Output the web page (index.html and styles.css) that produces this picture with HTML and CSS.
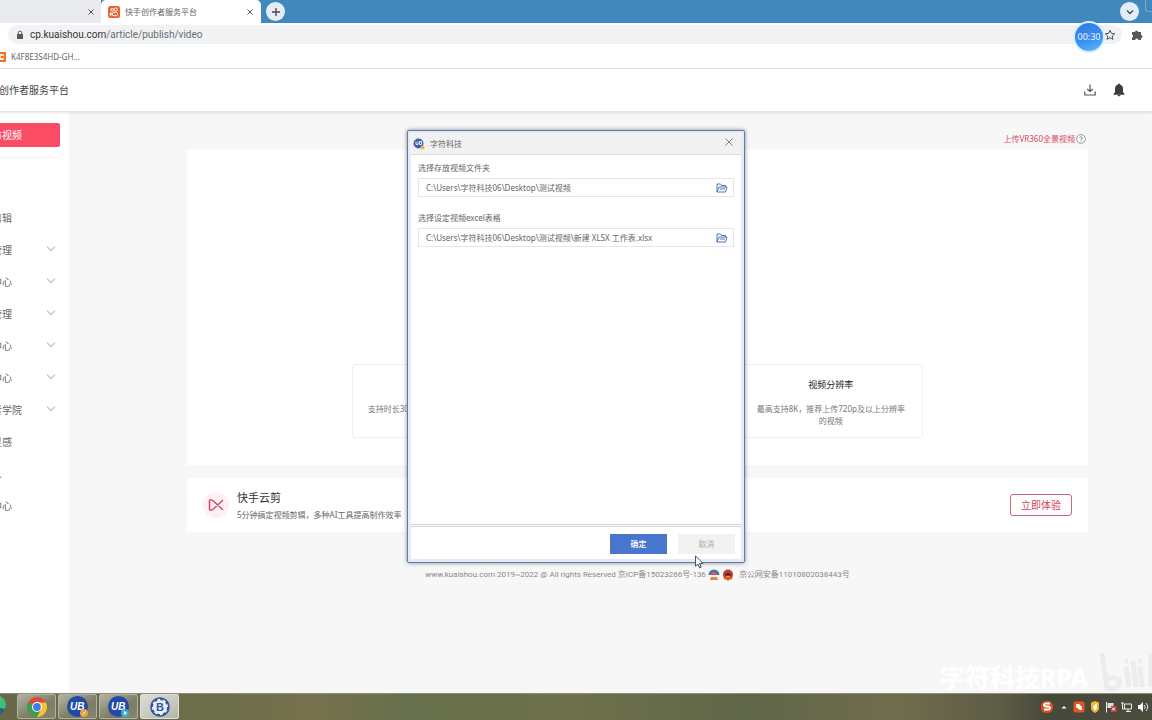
FILE: index.html
```html
<!DOCTYPE html>
<html lang="zh-CN">
<head>
<meta charset="utf-8">
<title>快手创作者服务平台</title>
<link rel="stylesheet" href="styles.css">
</head>
<body>
<div class="screen">
  <div class="tabs">
    <div class="tab tab-idle"><button class="close" aria-label="关闭"><svg width="8" height="8" viewBox="0 0 8 8"><path d="M1.5 1.5l5 5m0-5l-5 5"/></svg></button></div>
    <div class="tab tab-active">
      <svg width="12" height="12" viewBox="0 0 12 12"><rect width="12" height="12" rx="2.5" fill="#e8622a"/><g fill="none" stroke="#fff"><circle cx="4.2" cy="3.8" r="1.4"/><circle cx="7.8" cy="3.6" r="1.6"/><rect x="4.5" y="6.5" width="5" height="3.2" rx="1"/><path d="M2.2 6.8l2.3 1.2-2.3 1.6z"/></g></svg>
      <span class="tab-title">快手创作者服务平台</span>
      <button class="close" aria-label="关闭"><svg width="8" height="8" viewBox="0 0 8 8"><path d="M1.5 1.5l5 5m0-5l-5 5"/></svg></button>
    </div>
    <button class="round new-tab" aria-label="新标签页"><svg width="10" height="10" viewBox="0 0 10 10"><path d="M5 1v8M1 5h8"/></svg></button>
    <button class="round tab-search" aria-label="搜索标签页"><svg width="10" height="10" viewBox="0 0 10 10"><path d="M2 3.5l3 3 3-3"/></svg></button>
    <div class="win-edge"></div>
  </div>
  <div class="toolbar">
    <div class="address">
      <svg width="8" height="10" viewBox="0 0 8 10"><rect x="1" y="4" width="6" height="5" rx=".6" fill="#555a5e"/><path d="M2.3 4V2.8a1.7 1.7 0 0 1 3.4 0V4" fill="none" stroke="#555a5e"/></svg>
      <span class="url"><b>cp.kuaishou.com</b>/article/publish/video</span>
      <svg class="star" width="12" height="12" viewBox="0 0 12 12"><path d="M6 1.3l1.4 3.1 3.3.4-2.5 2.2.7 3.4L6 8.7l-2.9 1.7.7-3.4L1.3 4.8l3.3-.4z" fill="none" stroke="#4c5054"/></svg>
    </div>
    <svg width="12" height="12" viewBox="0 0 12 12"><path d="M1 3h3a1.5 1.5 0 1 1 3 0h3v3a1.5 1.5 0 1 1 0 3v2H7.4a1.6 1.6 0 0 0-3.2 0H1V8.400a1.5 1.5 0 0 0 0-2.900z" fill="#55595d"/></svg>
    <div class="timer">00:30</div>
  </div>
  <div class="bookmarks">
    <svg width="6" height="12" viewBox="0 0 6 12"><rect x="-6" y="1" width="12" height="10" rx="1" fill="#ee7424"/><path d="M3.800 4.500Q0 2.500 0 6t3.800 1.500" fill="none" stroke="#fff" stroke-width="1.500"/></svg>
    <a href="#">K4F8E3S4HD-GH...</a>
  </div>
  <header class="header">
    <span class="site-name">创作者服务平台</span>
    <svg width="12" height="12" viewBox="0 0 12 12"><path d="M6 .5v6.800M3.200 5L6 7.500 8.800 5M.8 7.500V11h10.400V7.500" fill="none" stroke="#555" stroke-width="1.200"/></svg>
    <svg width="12" height="14" viewBox="0 0 12 14"><path d="M6 .5c.6 0 .9.400 1 .9C9 2 10 3.700 10 5.500V9l1.500 2v.7H.5V11L2 9V5.500C2 3.700 3 2 5 1.400c.1-.5.400-.9 1-.9zM4.500 12h3c0 1.800-3 1.800-3 0z" fill="#3c3c3c"/></svg>
  </header>
  <div class="body">
    <nav class="side">
      <div class="publish-wrap"><button class="publish"><span class="clip wide">布视频</span></button></div>
      <ul class="menu">
        <li><span class="clip">剪辑</span></li>
        <li class="more"><span class="clip">管理</span></li>
        <li class="more"><span class="clip">中心</span></li>
        <li class="more"><span class="clip">管理</span></li>
        <li class="more"><span class="clip">中心</span></li>
        <li class="more"><span class="clip">中心</span></li>
        <li class="more"><span class="clip wide">者学院</span></li>
        <li><span class="clip">灵感</span></li>
        <li><span class="clip tiny">人</span></li>
        <li><span class="clip">中心</span></li>
      </ul>
    </nav>
    <main class="main">
      <div class="vr"><a href="#">上传VR360全景视频</a><svg width="10" height="10" viewBox="0 0 10 10"><circle cx="5" cy="5" r="4.400" fill="none" stroke="#888" stroke-width=".8"/><path d="M3.700 4a1.300 1.300 0 1 1 1.300 1.400v.8M5 7v.8" fill="none" stroke="#888" stroke-width=".8"/></svg></div>
      <section class="upload">
        <div class="specs">
          <article class="spec"><h3>视频大小</h3><p>支持时长30分钟以内，最大支持8GB的视频</p></article>
          <article class="spec"><h3>视频格式</h3><p>支持常用视频格式</p></article>
          <article class="spec"><h3>视频分辨率</h3><p>最高支持8K，推荐上传720p及以上分辨率的视频</p></article>
        </div>
      </section>
      <section class="promo">
        <svg width="28" height="28" viewBox="0 0 28 28"><circle cx="14" cy="14" r="13" fill="#fff1f3"/><path d="M20.500 9.500L12 17.500c-2 1.700-4.500 2.400-4.500.5v-8c0-2 2.500-1.200 4.500.5l8.500 8" fill="none" stroke="#d04a66" stroke-width="1.500" stroke-linecap="round"/></svg>
        <div class="promo-text"><h2>快手云剪</h2><p>5分钟搞定视频剪辑，多种AI工具提高制作效率</p></div>
        <button class="try">立即体验</button>
      </section>
      <footer class="footer">
        <span>www.kuaishou.com 2019~2022 @ All rights Reserved 京ICP备15023266号-136</span>
        <svg width="12" height="12" viewBox="0 0 12 12"><path d="M.5 6a5.500 5.500 0 0 1 11 0z" fill="#3e78a8"/><path d="M3 6a3 3 0 0 1 6 0z" fill="#d95948"/><path d="M1 6.500h10v2H1z" fill="#f5f5f5"/><path d="M3 8h6l1 3H2z" fill="#e98242"/></svg>
        <svg width="12" height="12" viewBox="0 0 12 12"><path d="M2 8l-1 2 5 2 5-2-1-2z" fill="#e9ad3d"/><circle cx="6" cy="5.500" r="5" fill="#c43c31"/><path d="M3 5q3-3 6 0v1.500H3z" fill="#60251f"/><path d="M4 8h4" stroke="#f6c95c"/></svg>
        <span>京公网安备11010802038443号</span>
      </footer>
      <div class="watermark"><span>字符科技RPA</span>
        <svg width="52" height="44" viewBox="0 0 52 44" fill="none" stroke="#ececec" stroke-width="5"><path d="M2 4l5 35q10 3 12-4t-12-6M26 18l3 20M33 12l3 26M40 18l2 20M51 4v34"/><path d="M26 10l1 4M40 10l1 4" stroke-width="3"/></svg>
      </div>
    </main>
  </div>
  <div class="overlay">
    <div class="dialog" role="dialog" aria-label="字符科技">
      <div class="titlebar">
        <svg width="12" height="12" viewBox="0 0 12 12"><circle cx="5.500" cy="5.500" r="5" fill="#3d62ad"/><path d="M3 3.500v3h2v-3M6.500 3.500v3h2v-3z" fill="none" stroke="#dfe8fa"/><circle cx="9.500" cy="9.500" r="2" fill="#ecb656"/></svg>
        <span>字符科技</span>
        <button class="dialog-close" aria-label="关闭"><svg width="8" height="8" viewBox="0 0 8 8"><path d="M.5.5l7 7m0-7l-7 7" stroke="#666" stroke-width=".8"/></svg></button>
      </div>
      <div class="form">
        <label for="folder">选择存放视频文件夹</label>
        <div class="field"><input id="folder" type="text" value="C:\Users\字符科技06\Desktop\测试视频"><button aria-label="浏览文件夹"><svg width="12" height="10" viewBox="0 0 12 10"><path d="M1 9V1h3.500l1 1.500H9.500V4M1 9l2-5h8l-1.500 5zM4 6h5" fill="none" stroke="#4a78b5"/></svg></button></div>
        <label for="sheet">选择设定视频excel表格</label>
        <div class="field"><input id="sheet" type="text" value="C:\Users\字符科技06\Desktop\测试视频\新建 XLSX 工作表.xlsx"><button aria-label="浏览表格"><svg width="12" height="10" viewBox="0 0 12 10"><path d="M1 9V1h3.500l1 1.500H9.500V4M1 9l2-5h8l-1.500 5zM4 6h5" fill="none" stroke="#4a78b5"/></svg></button></div>
      </div>
      <div class="actions"><button class="ok">确定</button><button class="cancel">取消</button></div>
      <svg class="cursor" width="9" height="14" viewBox="0 0 9 14"><path d="M.5.8v10.400l2.400-2.200 1.700 3.900 1.600-.7-1.600-3.800h3.300z" fill="#fff" stroke="#333f50" stroke-width=".9"/></svg>
    </div>
  </div>
  <div class="taskbar">
    <svg class="edge-app" width="6" height="22" viewBox="0 0 6 22"><circle cx="-4" cy="11" r="10" fill="#24628c"/><path d="M-4 1A10 10 0 0 1 5 15L-4 13z" fill="#46bd75"/></svg>
    <button class="app" aria-label="Chrome"><svg width="22" height="22" viewBox="0 0 22 22"><circle cx="11" cy="11" r="10" fill="#dc4939"/><path d="M11 11L2.300 6A10 10 0 0 0 11 21l5-7z" fill="#3d9e50"/><path d="M11 6.500h9A10 10 0 0 1 11 21l4.300-8z" fill="#f2c52f"/><circle cx="11" cy="11" r="5" fill="#fff"/><circle cx="11" cy="11" r="3.900" fill="#3f7ed9"/></svg></button>
    <button class="app" aria-label="UB"><svg width="24" height="24" viewBox="0 0 24 24"><circle cx="11.500" cy="11.500" r="10.500" fill="#2049a8"/><text class="ub" x="4" y="15">UB</text><circle cx="18" cy="18" r="4" fill="#e5a33d"/><path d="M16.500 19.500l3-3" stroke="#fff"/></svg></button>
    <button class="app" aria-label="UB"><svg width="24" height="24" viewBox="0 0 24 24"><circle cx="11.500" cy="11.500" r="10.500" fill="#2049a8"/><text class="ub" x="4" y="15">UB</text><circle cx="18" cy="18" r="4" fill="#3eaed0"/><path d="M17 16l3 2-3 2z" fill="#fff"/></svg></button>
    <button class="app current" aria-label="B"><svg width="22" height="22" viewBox="0 0 22 22"><circle cx="11" cy="11" r="9" fill="#e7f0fb" stroke="#2f56a2" stroke-width="1.600"/><circle cx="11" cy="11" r="8" fill="none" stroke="#2f56a2" stroke-width="2" stroke-dasharray="3.280 3"/><text class="bb" x="7" y="15">B</text></svg></button>
    <div class="tray">
      <svg width="12" height="14" viewBox="0 0 12 14"><rect y="1" width="12" height="12" rx="5" fill="#d94e27"/><path d="M9 3.500H5Q3 3.500 3 5t2 1.500h2q2 0 2 1.500T7 9.500H3" fill="none" stroke="#fff" stroke-width="1.800"/></svg>
      <svg width="12" height="14" viewBox="-2 0 12 14"><path d="M2.500 8.500l2.500-2.500 2.500 2.500z" fill="#fff"/></svg>
      <svg width="12" height="14" viewBox="0 0 12 14"><rect x=".5" y="1.500" width="11" height="11" rx="2" fill="#ea5423"/><path d="M3 4h3l3 3V4.500V10H7L3 7z" fill="#fff"/></svg>
      <svg width="12" height="14" viewBox="-1 0 12 14"><path d="M5 1l4 1.500V8q0 3-4 5-4-2-4-5V2.500z" fill="#f0b52d"/><path d="M6.500 3L3 6.500 4 10q3 0 3-3.500z" fill="#fff"/></svg>
      <svg width="12" height="14" viewBox="0 0 12 14"><path d="M1.500 2v10.500" stroke="#eee"/><path d="M2.500 3h6v5h-6z" fill="#ddd"/><path d="M6 6h5.500v6H6z" fill="#c23c43"/><path d="M7 7.500l3 3m0-3l-3 3" stroke="#fff"/></svg>
      <svg width="12" height="14" viewBox="0 0 12 14"><path d="M3.500 4h7v5h-7zM5 11.500h5M7 9v2M1.500 3v6h2M0 3h3" fill="none" stroke="#eee"/></svg>
      <svg width="12" height="14" viewBox="0 0 12 14"><path d="M1 5h2l3-3v10L3 9H1z" fill="#fff"/><path d="M7.500 5q1.500 2 0 4M9 3q3.500 4 0 8" fill="none" stroke="#ddd"/></svg>
    </div>
  </div>
</div>
</body>
</html>
```

FILE: styles.css
```css
* { box-sizing: border-box; }
body, h2, h3, p, ul { margin: 0; padding: 0; }
body { font-family: "Noto Sans", "Noto Sans CJK SC", sans-serif; font-size: 8px; line-height: 12px; color: #666; }
button { font: inherit; border: 0; padding: 0; background: none; color: inherit; display: flex; align-items: center; justify-content: center; }
a { color: inherit; text-decoration: none; }
svg { flex: none; display: block; }
.screen { position: relative; height: 100vh; display: flex; flex-direction: column; overflow: hidden; background: #fff; }

.tabs { flex: none; height: 23px; display: flex; align-items: center; background: #4189bd; }
.tab { height: 100%; display: flex; align-items: center; }
.tab-idle { width: 101px; justify-content: flex-end; padding-right: 6px; background: #e8eaed; }
.tab-active { width: 160px; padding: 0 7px; gap: 5px; background: #fff; border-radius: 5px 5px 0 0; }
.tab-title { flex: 1; color: #666; }
.close svg { fill: none; stroke: #555; }
.round { width: 19px; height: 19px; border-radius: 50%; background: #e4ecf5; }
.round svg { fill: none; stroke: #444; stroke-width: 1.3; }
.new-tab { margin-left: 5px; }
.tab-search { margin-left: auto; margin-right: 6px; }
.win-edge { width: 7px; height: 12px; align-self: flex-start; border: solid #78abd0; border-width: 0 0 1px 1px; border-radius: 0 0 0 3px; }

.toolbar { position: relative; flex: none; height: 23px; display: flex; align-items: center; gap: 9px; padding: 0 9px 0 8px; }
.address { flex: 1; height: 19px; display: flex; align-items: center; gap: 6px; padding: 0 6px 0 8px; border-radius: 10px; background: #f0f2f4; }
.url { flex: 1; font-family: Roboto, "Noto Sans", sans-serif; font-size: 10px; color: #6a6e72; }
.url b { font-weight: 400; color: #333; }
.timer { position: absolute; right: 47px; top: -2px; width: 32px; height: 32px; border: 2px solid #d5effd; border-radius: 50%; background: linear-gradient(160deg, #3478df, #3b91f4 60%, #65bdf9); color: #e9f5ff; font-size: 9px; line-height: 28px; text-align: center; }
.bookmarks { flex: none; height: 23px; display: flex; align-items: center; gap: 5px; padding-bottom: 1px; border-bottom: 1px solid #e3e5e6; }
.header { position: relative; flex: none; height: 43px; display: flex; align-items: center; gap: 17px; padding-right: 27px; border-bottom: 1px solid #e4e4e4; box-shadow: 0 1px 3px #0000001a; background: #fff; }
.site-name { flex: 1; margin-left: -1px; font-size: 10px; color: #444; }

.body { flex: 1; min-height: 0; display: flex; background: #f7f7f7; }
.side { flex: none; width: 69px; background: #fff; overflow: hidden; }
.publish-wrap { margin-right: 9px; padding: 11px 0 10px; border-bottom: 1px solid #f6f3ee; }
.publish { width: 100%; height: 24px; justify-content: flex-start; border-radius: 0 2px 2px 0; background: #fb4c65; color: #fff; }
.clip { display: flex; justify-content: flex-end; width: 12px; font-size: 10px; white-space: nowrap; }
.clip.wide { width: 22px; }
.clip.tiny { width: 2px; }
.menu { list-style: none; padding-top: 44px; }
.menu li { height: 32px; display: flex; align-items: center; justify-content: space-between; padding-right: 15px; }
.more::after { content: ""; width: 5px; height: 5px; margin-bottom: 6px; border: solid #bbb; border-width: 0 1px 1px 0; transform: rotate(45deg); }

.main { position: relative; flex: 1; padding: 20px 64px 0 118px; }
.vr { display: flex; justify-content: flex-end; align-items: center; gap: 1px; height: 13px; margin: 0 2px 4px 0; color: #d64a63; }
.upload { height: 316px; padding: 215px 165px 0; background: #fff; }
.specs { display: grid; grid-template-columns: repeat(3, 1fr); gap: 9px; }
.spec { height: 74px; padding: 14px 14px 0; border: 1px solid #efefef; border-radius: 3px; text-align: center; }
.spec h3 { margin-bottom: 12px; font-size: 9px; line-height: 12px; font-weight: 400; color: #222; }
.spec p { color: #777; }
.promo { display: flex; align-items: center; gap: 7px; height: 54px; margin-top: 13px; padding: 0 16px 0 15px; background: #fff; }
.promo-text { flex: 1; }
.promo h2 { font-size: 11px; line-height: 16px; margin-bottom: 3px; font-weight: 400; color: #333; }
.try { width: 62px; height: 22px; border: 1px solid #c9667b; border-radius: 3px; font-size: 10px; color: #cf3f58; }
.footer { display: flex; align-items: center; justify-content: center; gap: 2px; margin-top: 37px; font-family: Roboto, "Noto Sans CJK SC", sans-serif; color: #888; white-space: nowrap; }
.footer span:last-child { margin-left: 3px; }
.watermark { position: absolute; right: 0; bottom: 0; display: flex; align-items: flex-end; gap: 12px; font-size: 25px; line-height: 32px; font-weight: 700; color: #fff; overflow: hidden; }

.overlay { position: absolute; inset: 0 0 27px; display: flex; align-items: center; justify-content: center; }
.dialog { position: relative; width: 338px; height: 433px; display: flex; flex-direction: column; padding: 2px; border: 1px solid #66799b; border-radius: 2px; background: #e4ebf8; box-shadow: 0 0 4px #34435c99; }
.titlebar { flex: none; height: 22px; display: flex; align-items: center; gap: 5px; padding: 0 9px 0 3px; background: #f1f1f2; border-bottom: 1px solid #dedede; }
.titlebar span { flex: 1; }
.dialog-close { margin-bottom: 4px; }
.form { flex: 1; margin: 0 1px; padding: 7px 7px 0; background: #fff; }
.form label { display: block; }
.field { display: flex; align-items: center; height: 19px; margin: 4px 0 15px; padding: 0 5px 0 7px; border: 1px solid #e4e6e8; }
.field input { flex: 1; min-width: 0; border: 0; padding: 0; outline: 0; background: none; font: inherit; color: inherit; }
.actions { flex: none; height: 35px; display: flex; align-items: center; justify-content: flex-end; gap: 11px; margin: 0 1px 1px; padding: 2px 6px 0; border-top: 3px double #d4d4d4; background: #fff; }
.actions button { width: 57px; height: 20px; }
.ok { background: #4776cc; color: #fff; font-weight: 500; }
.cancel { background: #f2f2f2; color: #aaa; }
.cursor { position: absolute; right: 40px; bottom: -7px; }

.taskbar { position: relative; flex: none; height: 27px; display: flex; align-items: stretch; gap: 2px; padding: 0 3px 1px 0; border-top: 1px solid #8d8e77; background: linear-gradient(90deg, #67674a, #6d6e4a 20%, #77724d 27%, #67704c 35%, #6d704b 50%, #606649 65%, #706d4c 78%, #5c5b45 87%, #464839 91%, #4c4c3d); }
.edge-app { margin-right: 9px; }
.app { width: 39px; border: 1px solid #b0b1a0; border-radius: 2px; background: linear-gradient(150deg, #b2b3a4, #7d7d65 60%, #858670); }
.app.current { background: linear-gradient(150deg, #deded9, #b5b6a9); border-color: #dcddd3; }
.ub { font: italic 700 10px "Liberation Sans", sans-serif; fill: #fff; }
.bb { font: 700 11px "Liberation Sans", sans-serif; fill: #2f56a2; }
.tray { display: flex; align-items: center; gap: 4px; margin-left: auto; }
```
